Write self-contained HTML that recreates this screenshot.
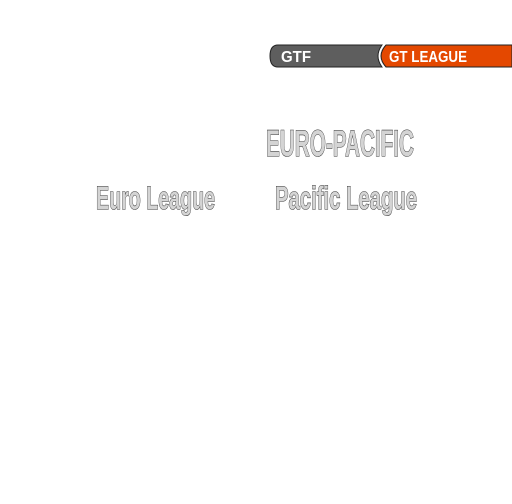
<!DOCTYPE html>
<html><head><style>
html,body{margin:0;padding:0;background:#fff;width:512px;height:504px;overflow:hidden}
</style></head><body>
<svg width="512" height="504" xmlns="http://www.w3.org/2000/svg" style="position:absolute;left:0;top:0">
<path d="M278,45 H382 Q374,56 382,67 H278 Q270,67 270,56 Q270,45 278,45 Z" fill="#5e5e5e" stroke="#222" stroke-width="1"/>
<path d="M386,45 H512 V67 H386 Q376,56 386,45 Z" fill="#e44800" stroke="#222" stroke-width="1"/>
<text x="281" y="62" font-family="Liberation Sans, sans-serif" font-weight="bold" font-size="16" fill="#fff" textLength="30" lengthAdjust="spacingAndGlyphs">GTF</text>
<text x="389" y="62" font-family="Liberation Sans, sans-serif" font-weight="bold" font-size="16" fill="#fff" textLength="78" lengthAdjust="spacingAndGlyphs">GT LEAGUE</text>
<g font-family="Liberation Sans, sans-serif" font-weight="bold" fill="#d4d4d4" stroke="#333" stroke-width="1.1" paint-order="stroke">
<text x="266" y="156" font-size="37" textLength="148" lengthAdjust="spacingAndGlyphs">EURO-PACIFIC</text>
<text x="96" y="209" font-size="32" textLength="119" lengthAdjust="spacingAndGlyphs">Euro League</text>
<text x="275" y="209" font-size="32" textLength="142" lengthAdjust="spacingAndGlyphs">Pacific League</text>
</g>
</svg>
</body></html>
